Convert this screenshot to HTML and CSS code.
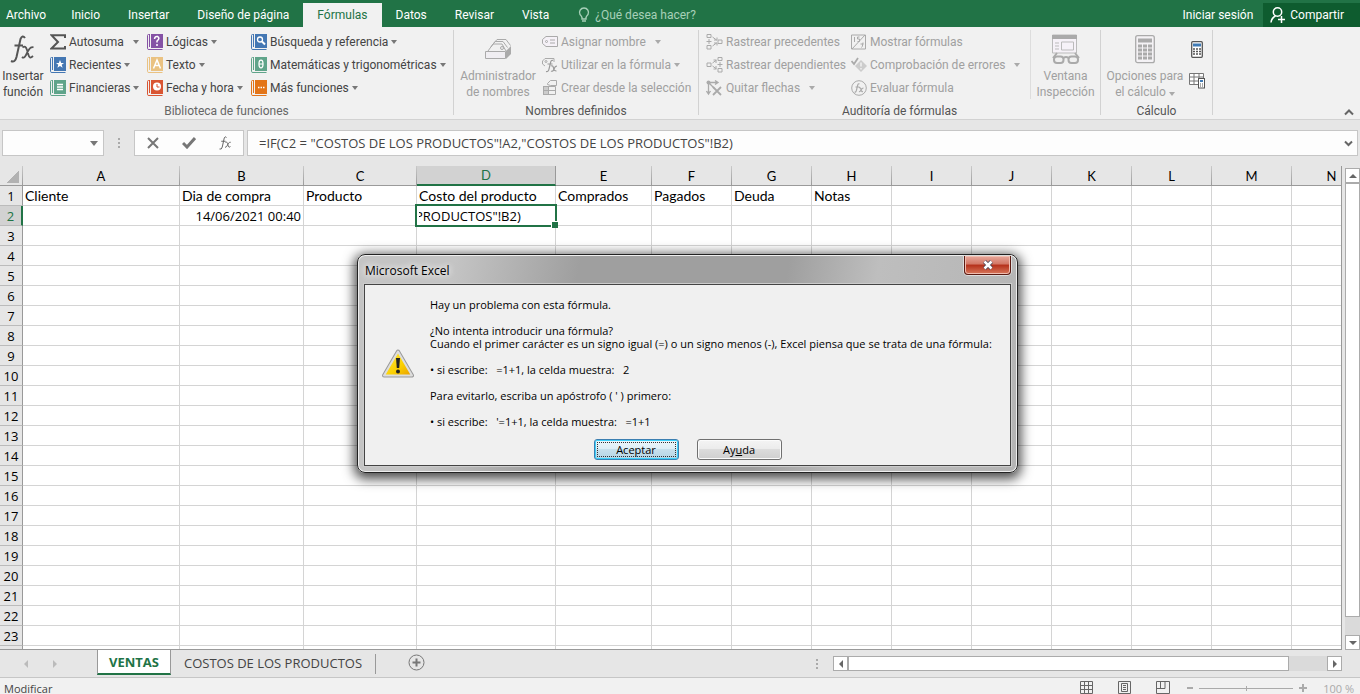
FILE: index.html
```html
<!DOCTYPE html>
<html lang="es">
<head>
<meta charset="utf-8">
<title>Microsoft Excel</title>
<link rel="stylesheet" href="styles.css">
</head>
<body>
<svg class="defs" aria-hidden="true">
  <symbol id="book" viewBox="0 0 16 16"><path d="M2.500 .5H1.500Q.5.5 .5 1.500V14.500Q.5 15.500 2 15.500H15.500" fill="none" stroke="currentColor"/><path d="M2 0h1v13H2z" fill="currentColor"/><path d="M4 0h12v14H4z" fill="currentColor"/></symbol>
  <symbol id="fx" viewBox="0 0 26 28"><path d="M15 3Q12.500-.5 10.500 4L6.500 22Q5 28 1 26M4.500 10.500H13" fill="none" stroke="currentColor" stroke-width="2"/><path d="M12.500 12.500Q15.500 10 17 15L18.500 20Q19.500 24.500 23 21M23.500 12.500Q21 11 18 16L16 20Q14 24 12 22" fill="none" stroke="currentColor" stroke-width="1.800"/></symbol>
</svg>

<header class="tabs">
  <nav class="tab-list">
    <button class="tab tab-file">Archivo</button>
    <button class="tab">Inicio</button>
    <button class="tab">Insertar</button>
    <button class="tab">Diseño de página</button>
    <button class="tab tab-active">Fórmulas</button>
    <button class="tab">Datos</button>
    <button class="tab">Revisar</button>
    <button class="tab">Vista</button>
  </nav>
  <button class="tell-me"><svg width="12" height="16" viewBox="0 0 12 16"><path d="M4 10.500Q3.500 9 2 7.500A4.500 4.500 0 1 1 10 7.500Q8.500 9 8 10.500V12H4zM4 14h4" fill="none" stroke="currentColor" stroke-width="1.400"/></svg><span>¿Qué desea hacer?</span></button>
  <button class="sign-in">Iniciar sesión</button>
  <button class="share"><svg width="16" height="16" viewBox="0 0 16 16"><circle cx="7.500" cy="5" r="4.200" fill="none" stroke="#fff" stroke-width="1.500"/><path d="M1 15.500Q1.500 11 5.500 9M8 12.500h7M11.500 9v7" fill="none" stroke="#fff" stroke-width="1.500"/></svg><span>Compartir</span></button>
</header>

<section class="ribbon">
  <div class="group group-library">
    <div class="group-body">
      <button class="big insert-fn"><svg class="big-icon" width="26" height="30"><use href="#fx"/></svg><span>Insertar<br>función</span></button>
      <div class="cmds">
        <button class="cmd cmd-sum"><svg width="16" height="16" viewBox="0 0 16 16"><path d="M15 4V1.200H1.500L8 8 1.500 14.500H15V12" fill="none" stroke="#555" stroke-width="2"/></svg><span>Autosuma</span><i class="caret"></i></button>
        <button class="cmd blue"><svg width="16" height="16"><use href="#book"/><path d="M10 3l1.200 3H14l-2.300 1.800.9 3L10 9l-2.600 1.800.9-3L6 6h2.800z" fill="#fff"/></svg><span>Recientes</span><i class="caret"></i></button>
        <button class="cmd teal"><svg width="16" height="16"><use href="#book"/><path d="M7 4.500h6M7 7h6M7 9.500h6" stroke="#fff" stroke-width="1.500"/></svg><span>Financieras</span><i class="caret"></i></button>
      </div>
      <div class="cmds">
        <button class="cmd purple"><svg width="16" height="16"><use href="#book"/><path d="M7.500 5Q8 2 10.500 2.500 13.500 4 10 7V8.500M10 10v2" fill="none" stroke="#fff" stroke-width="1.500"/></svg><span>Lógicas</span><i class="caret"></i></button>
        <button class="cmd sand"><svg width="16" height="16"><use href="#book"/><path d="M6.500 11.500L10 3l3.500 8.500M8 8.500h4" fill="none" stroke="#fff" stroke-width="1.500"/></svg><span>Texto</span><i class="caret"></i></button>
        <button class="cmd red"><svg width="16" height="16"><use href="#book"/><circle cx="10" cy="6.500" r="4" fill="#fff"/><path d="M10 4v3h2.500" fill="none" stroke="#d95532"/></svg><span>Fecha y hora</span><i class="caret"></i></button>
      </div>
      <div class="cmds">
        <button class="cmd blue"><svg width="16" height="16"><use href="#book"/><circle cx="9" cy="5.500" r="2.500" fill="none" stroke="#fff" stroke-width="1.300"/><path d="M11 7.500l3 3" stroke="#fff" stroke-width="2"/></svg><span>Búsqueda y referencia</span><i class="caret"></i></button>
        <button class="cmd teal"><svg width="16" height="16"><use href="#book"/><ellipse cx="10" cy="7" rx="2" ry="3.800" fill="none" stroke="#fff" stroke-width="1.300"/><path d="M8 7h4" stroke="#fff"/></svg><span>Matemáticas y trigonométricas</span><i class="caret"></i></button>
        <button class="cmd orange"><svg width="16" height="16"><use href="#book"/><path d="M7 7.500h1.500M9.500 7.500H11M12 7.500h1.500" stroke="#fff" stroke-width="1.500"/></svg><span>Más funciones</span><i class="caret"></i></button>
      </div>
    </div>
    <div class="group-label muted">Biblioteca de funciones</div>
  </div>

  <div class="group group-names">
    <div class="group-body off">
      <button class="big name-mgr"><svg class="big-icon" width="28" height="30" viewBox="0 0 28 30"><g transform="translate(0 2)"><path d="M1.500 15.500h20v7h-20z" fill="#f0eef2" stroke="#aaa"/><path d="M22 15l5-5v8l-5 5z" fill="#aaa"/><path d="M4 15l5-7h9l4 7M7 11l4-5.500h8l4.500 6M10 7l3-3.500h9l4.500 6" fill="none" stroke="#aaa"/><circle cx="18" cy="12" r="1.500" fill="none" stroke="#aaa"/></g></svg><span>Administrador<br>de nombres</span></button>
      <div class="cmds">
        <button class="cmd"><svg width="16" height="16" viewBox="0 0 16 16"><path d="M4 2.500h11.500v10H4L.5 9.500v-4z" fill="#f5f1f7" stroke="#aaa"/><circle cx="4.500" cy="7.500" r="1" fill="none" stroke="#aaa"/><path d="M8 6h5M8 9h5" stroke="#aaa"/></svg><span>Asignar nombre</span><i class="caret caret-far"></i></button>
        <button class="cmd"><svg width="16" height="16" viewBox="0 0 16 16"><path d="M3 9L.5 7V4L3 1.500h9V5" fill="none" stroke="#aaa"/><circle cx="4" cy="4.500" r="1" fill="none" stroke="#aaa"/><path d="M11 3.500Q9 2.500 8.500 6L7 12Q6.500 15 4 14.500M5.500 7h5M9 9q2-1 2.500 2t3 3M15 9q-2 0-3 3t-3 2" fill="none" stroke="#999" stroke-width="1.200"/></svg><span>Utilizar en la fórmula</span><i class="caret"></i></button>
        <button class="cmd"><svg width="16" height="16" viewBox="0 0 16 16"><path d="M1 7h5v8H1z" fill="#ccc"/><path d="M1 6.500h12.500v8H1M1.500 6.500v8M6.500 6.500v8M1 10.500h12" fill="none" stroke="#aaa"/><path d="M5.500 4.500v-1l3-3h6v5h-6z" fill="#f1f1f1" stroke="#aaa"/></svg><span>Crear desde la selección</span></button>
      </div>
    </div>
    <div class="group-label">Nombres definidos</div>
  </div>

  <div class="group group-audit">
    <div class="group-body off">
      <div class="cmds">
        <button class="cmd"><svg width="17" height="16" viewBox="0 0 17 16" fill="none" stroke="#aaa"><path d="M1 .5h4v3H1zM1 11.500h4v3.500H1zM12 6h4v3.500h-4zM3 5v5M.5 7.500h5M6.500 3l4 3M6.500 12l4-3M8 6h3V3.500M8 9h3v2.500"/></svg><span>Rastrear precedentes</span></button>
        <button class="cmd"><svg width="17" height="16" viewBox="0 0 17 16" fill="none" stroke="#aaa"><path d="M12 .5h4v3h-4zM12 11.500h4v3.500h-4zM1 6h4v3.500H1zM14 5v5M11.500 7.500h5M6.500 6l4-3M6.500 9l4 3M7.500 3H10v3M7.500 12H10V9"/></svg><span>Rastrear dependientes</span></button>
        <button class="cmd"><svg width="17" height="16" viewBox="0 0 17 16" fill="none" stroke="#aaa"><path d="M2.500 2v12M.5 11l2 3 2-3M2 2.500h10M9 .5l3 2-3 2M3 3l5 5" stroke-width="1.300"/><path d="M7 7l8 8M15 7l-8 8" stroke-width="1.800"/><circle cx="2.500" cy="2.500" r="2" fill="#aaa" stroke="none"/></svg><span>Quitar flechas</span><i class="caret caret-far"></i></button>
      </div>
      <div class="cmds">
        <button class="cmd"><svg width="16" height="16" viewBox="0 0 16 16" fill="none" stroke="#aaa"><path d="M.5 15V1h14v14zM1 15L14 1"/><path d="M3.500 3v5M8.500 3H6.500v2h2v2.500h-2M10.500 13.500q1 0 1.500-5M9.500 10h3"/></svg><span>Mostrar fórmulas</span></button>
        <button class="cmd"><svg width="16" height="16" viewBox="0 0 16 16"><path d="M10 3l6 6-6 6-6-6z" fill="#ccc"/><path d="M10 5.500v4M10 11v1.500" stroke="#f0f0f0" stroke-width="1.500"/><path d="M.5 4l2.500 3 4-6" fill="none" stroke="#aaa" stroke-width="1.800"/></svg><span>Comprobación de errores</span><i class="caret caret-far"></i></button>
        <button class="cmd"><svg width="16" height="16" viewBox="0 0 16 16" fill="none" stroke="#aaa"><circle cx="8" cy="8" r="7.300"/><path d="M8.500 4Q7 3 6.500 6L5.500 10Q5 12.500 3.500 12M4.500 7h4M8 8q1.500-1 2 1.500t2 2M12.500 8q-1.500 0-2.500 2t-2 1.500" stroke-width="1.200"/></svg><span>Evaluar fórmula</span></button>
      </div>
      <button class="big watch"><svg class="big-icon" width="30" height="30" viewBox="0 0 30 30"><path d="M1.500 1h24v18h-24z" fill="#f6f2f8" stroke="#bbb"/><path d="M1 1h25v4H1z" fill="#aaa"/><path d="M4 9h4M4 12h4M4 15h4M10.500 8h12v8h-12z" fill="none" stroke="#bbb"/><path d="M1 20h28v10H1z" fill="#f0f0f0"/><path d="M2 24l4-5M28 24l-4-5M12.500 24q2.500-2 5 0" fill="none" stroke="#aaa" stroke-width="2"/><rect x="3" y="22.500" width="9.500" height="6.500" rx="3" fill="none" stroke="#aaa" stroke-width="2"/><rect x="17.500" y="22.500" width="9.500" height="6.500" rx="3" fill="none" stroke="#aaa" stroke-width="2"/></svg><span>Ventana<br>Inspección</span></button>
    </div>
    <div class="group-label">Auditoría de fórmulas</div>
  </div>

  <div class="group group-calc">
    <div class="group-body">
      <button class="big calc-opt off"><svg class="big-icon" width="20" height="30" viewBox="0 0 20 30"><rect x=".7" y="1.700" width="18.600" height="27" rx="2" fill="#f4f2f5" stroke="#aaa" stroke-width="1.300"/><path d="M3 4.500h14v4H3z" fill="#aaa"/><path d="M3 12h14M3 16h14M3 20h14M3 24h14" stroke="#aaa" stroke-width="3" stroke-dasharray="4 1"/></svg><span>Opciones para<br>el cálculo <i class="caret"></i></span></button>
      <div class="calc-now">
        <button class="icon-btn" aria-label="Calcular ahora"><svg width="16" height="17" viewBox="0 0 16 17"><rect x="2.700" y=".7" width="10.600" height="15.600" rx="1" fill="#fff" stroke="#555" stroke-width="1.300"/><path d="M4 2.500h8v3H4z" fill="#3f7ab5"/><path d="M4 8h8M4 10.500h8M4 13h8" stroke="#555" stroke-width="1.500" stroke-dasharray="2 1"/></svg></button>
        <button class="icon-btn" aria-label="Calcular hoja"><svg width="16" height="17" viewBox="0 0 16 17"><path d="M.5 1.500h14v11H.5zM.5 5h14M.5 9h14M5 1v12M10 1v12" fill="#fff" stroke="#777"/><rect x="9.500" y="6.500" width="6" height="9.500" fill="#fff" stroke="#555"/><path d="M11 8h3v2h-3z" fill="#3f7ab5"/><path d="M11 12h3M11 14h3" stroke="#555" stroke-dasharray="1 1"/></svg></button>
      </div>
    </div>
    <div class="group-label">Cálculo</div>
  </div>
  <button class="collapse" aria-label="Contraer la cinta"><svg width="10" height="7" viewBox="0 0 10 7"><path d="M1 5.500l4-4 4 4" fill="none" stroke="#666" stroke-width="2"/></svg></button>
</section>

<section class="formula-bar">
  <div class="name-box"><input aria-label="Cuadro de nombres"><i class="caret"></i></div>
  <i class="dots"></i>
  <div class="edit-btns">
    <button aria-label="Cancelar"><svg width="12" height="12" viewBox="0 0 12 12"><path d="M1 1l10 10M11 1L1 11" stroke="#777" stroke-width="2"/></svg></button>
    <button aria-label="Introducir"><svg width="14" height="12" viewBox="0 0 14 12"><path d="M1 6l4 4 8-9" fill="none" stroke="#777" stroke-width="3"/></svg></button>
    <button class="fx-small" aria-label="Insertar función"><svg width="13" height="14"><use href="#fx"/></svg></button>
  </div>
  <div class="formula">
    <input aria-label="Barra de fórmulas" value="=IF(C2 = &quot;COSTOS DE LOS PRODUCTOS&quot;!A2,&quot;COSTOS DE LOS PRODUCTOS&quot;!B2)">
    <svg width="9" height="7" viewBox="0 0 9 7"><path d="M1 1.500l3.500 3.500L8 1.500" fill="none" stroke="#666" stroke-width="2"/></svg>
  </div>
</section>

<main class="sheet">
  <div class="grid-wrap">
    <table class="grid" id="grid"></table>
  </div>
  <div class="vscroll">
    <button class="sb-btn" aria-label="Subir"><i class="tri up"></i></button>
    <div class="vtrack"><div class="vthumb"></div></div>
    <button class="sb-btn" aria-label="Bajar"><i class="tri down"></i></button>
  </div>
</main>

<section class="sheet-tabs">
  <div class="sheet-nav"><i class="tri left"></i><i class="tri right"></i></div>
  <button class="sheet-tab sheet-active">VENTAS</button>
  <button class="sheet-tab">COSTOS DE LOS PRODUCTOS</button>
  <i class="tab-sep"></i>
  <button class="add-sheet" aria-label="Hoja nueva"><svg width="17" height="17" viewBox="0 0 17 17"><circle cx="8.500" cy="8.500" r="7.500" fill="none" stroke="#777"/><path d="M4.500 8.500h8M8.500 4.500v8" stroke="#777" stroke-width="2"/></svg></button>
  <div class="hscroll">
    <i class="dots"></i>
    <button class="sb-btn" aria-label="Izquierda"><i class="tri left"></i></button>
    <div class="htrack"><div class="hthumb"></div></div>
    <button class="sb-btn" aria-label="Derecha"><i class="tri right"></i></button>
  </div>
</section>

<footer class="status">
  <span>Modificar</span>
  <div class="views">
    <svg width="14" height="14" viewBox="0 0 14 14"><path d="M.5.5h12v12H.5zM.5 4.500h12M.5 8.500h12M4.500.5v12M8.500.5v12" fill="none" stroke="#666"/></svg>
    <svg width="14" height="14" viewBox="0 0 14 14"><path d="M.5.5h12v12H.5z" fill="none" stroke="#666"/><path d="M3.500 2.500h6v8h-6zM5 4.500h3M5 6.500h3M5 8.500h3" fill="none" stroke="#666"/></svg>
    <svg width="14" height="14" viewBox="0 0 14 14"><path d="M.5.5h13v12H.5zM.5 7.500h8.500V.5M4.500.5v7" fill="none" stroke="#666"/></svg>
  </div>
  <div class="zoom">
    <svg width="6" height="8" viewBox="0 0 6 8"><path d="M0 4h6" stroke="#aaa" stroke-width="2"/></svg>
    <svg width="94" height="8" viewBox="0 0 94 8"><path d="M0 4.500h94M47.500 2v5" stroke="#aaa"/></svg>
    <svg width="8" height="8" viewBox="0 0 8 8"><path d="M0 4h8M4 0v8" stroke="#aaa" stroke-width="2"/></svg>
    <span>100 %</span>
  </div>
</footer>

<div class="dialog" role="alertdialog" aria-labelledby="dlg-title">
  <div class="dlg-head">
    <span id="dlg-title">Microsoft Excel</span>
    <button class="dlg-close" aria-label="Cerrar"><svg width="12" height="10" viewBox="0 0 12 10"><path d="M2.500 1.500l7 7M9.500 1.500l-7 7" stroke="#445" stroke-width="4"/><path d="M2.500 1.500l7 7M9.500 1.500l-7 7" stroke="#fff" stroke-width="2.500"/></svg></button>
  </div>
  <div class="dlg-body">
    <div class="dlg-main">
      <svg width="32" height="30" viewBox="0 0 32 30"><defs><linearGradient id="warn" x2="1" y2="1"><stop offset="0" stop-color="#ffe94a"/><stop offset=".6" stop-color="#fbd000"/><stop offset="1" stop-color="#e89c00"/></linearGradient></defs><path d="M16 2.500L30 26.500H2z" fill="url(#warn)" stroke="#999" stroke-width="4" stroke-linejoin="round"/><path d="M16 2.500L30 26.500H2z" fill="url(#warn)" stroke="#ddd" stroke-width="2" stroke-linejoin="round"/><path d="M14 9h4l-.8 10h-2.400z" fill="#222"/><circle cx="16" cy="22.500" r="2" fill="#222"/></svg>
      <div class="dlg-text">
        <p>Hay un problema con esta fórmula.</p>
        <p>¿No intenta introducir una fórmula?<br>Cuando el primer carácter es un signo igual (=) o un signo menos (-), Excel piensa que se trata de una fórmula:</p>
        <p>• si escribe: &nbsp; =1+1, la celda muestra: &nbsp; 2</p>
        <p>Para evitarlo, escriba un apóstrofo ( ' ) primero:</p>
        <p>• si escribe: &nbsp; '=1+1, la celda muestra: &nbsp; =1+1</p>
      </div>
    </div>
    <div class="dlg-btns">
      <button class="dlg-btn dlg-ok">Aceptar</button>
      <button class="dlg-btn">Ay<u>u</u>da</button>
    </div>
  </div>
</div>
<script src="grid.js"></script>
</body>
</html>
```
FILE: grid.js
```js
const columns = [["A", 157], ["B", 124], ["C", 113], ["D", 139], ["E", 96], ["F", 80], ["G", 80], ["H", 80], ["I", 80], ["J", 80], ["K", 80], ["L", 80], ["M", 80], ["N", 80]];
const cells = {
  A1: "Cliente", B1: "Dia de compra", C1: "Producto", D1: "Costo del producto",
  E1: "Comprados", F1: "Pagados", G1: "Deuda", H1: "Notas", B2: "14/06/2021 00:40"
};
const labelledRows = 23;

let html = '<colgroup><col class="col-head">' + columns.map(c => `<col style="width:${c[1]}px">`).join("") + "</colgroup>";
html += '<thead><tr><th class="corner"></th>' + columns.map(c => `<th scope="col"${c[0] === "D" ? ' class="picked"' : ""}>${c[0]}</th>`).join("") + "</tr></thead><tbody>";
for (let r = 1; r <= labelledRows + 1; r++) {
  html += `<tr><th scope="row"${r === 2 ? ' class="picked"' : ""}>${r <= labelledRows ? r : ""}</th>`;
  for (const [name] of columns) {
    const id = name + r;
    if (id === "D2") html += '<td class="editing"><div class="editor"><span>PRODUCTOS"!B2)</span></div></td>';
    else html += `<td${id === "B2" ? ' class="num"' : ""}>${cells[id] || ""}</td>`;
  }
  html += "</tr>";
}
document.getElementById("grid").innerHTML = html + "</tbody>";
```
FILE: styles.css
```css
* { box-sizing: border-box; }
body {
  margin: 0; height: 100vh; display: flex; flex-direction: column; overflow: hidden;
  background: #e6e6e6; color: #444; position: relative;
  font: 12px/16px Roboto, "Open Sans", sans-serif;
}
button { border: 0; padding: 0; margin: 0; background: none; color: inherit; font: inherit; white-space: nowrap; }
input { font: inherit; color: inherit; border: 0; padding: 0; background: none; outline: 0; min-width: 0; }
svg { flex: none; display: block; }
.defs { position: absolute; width: 0; height: 0; }

.caret { display: inline-block; flex: none; border: 3px solid transparent; border-top: 4px solid #777; border-bottom: 0; }
.tri { width: 0; height: 0; border: 4px solid transparent; }
.tri.up { border-top: 0; border-bottom-color: #666; }
.tri.down { border-bottom: 0; border-top-color: #666; }
.tri.left { border-left: 0; border-right-color: #666; }
.tri.right { border-right: 0; border-left-color: #666; }
.dots { width: 2px; height: 10px; background: repeating-linear-gradient(#aaa 0 2px, transparent 2px 4px); }

.tabs { flex: none; height: 27px; display: flex; align-items: stretch; background: #217346; color: #fff; padding-top: 3px; }
.tab-list { display: flex; }
.tab { padding: 0 14px; }
.tab-file { padding: 0 11px 0 6px; }
.tab-active { background: #f1f1f1; color: #217346; }
.tell-me { display: flex; align-items: center; gap: 5px; margin-left: 15px; color: #a7d0b8; }
.sign-in { margin-left: auto; padding: 0 10px; }
.share { display: flex; align-items: center; gap: 4px; padding: 0 16px 0 7px; background: #0e5c2f; }

.ribbon { flex: none; display: flex; background: #f1f1f1; border-bottom: 1px solid #d2d2d2; padding-top: 3px; height: 93px; position: relative; }
.group { position: relative; display: flex; flex-direction: column; border-right: 1px solid #d2d2d2; margin-bottom: 4px; }
.group-body { display: flex; height: 69px; }
.group-label { text-align: center; margin-top: 4px; color: #555; }
.muted { color: #666; }
.off { color: #a0a0a0; }
.off .caret { border-top-color: #aaa; }
.group-library { width: 454px; }
.group-names { width: 245px; }
.group-audit { width: 402px; }
.group-calc { width: 112px; }
.big { display: flex; flex-direction: column; align-items: center; padding-top: 4px; }
.big-icon { margin-bottom: 4px; }
.insert-fn { width: 46px; margin-right: 4px; color: #555; }
.insert-fn span { color: #444; }
.name-mgr { width: 88px; }
.watch { width: 70px; margin-left: auto; border-left: 1px solid #ddd; }
.calc-opt { width: 88px; }
.cmds { display: flex; flex-direction: column; }
.cmd { height: 23px; display: flex; align-items: center; gap: 3px; }
.group-library .cmds { width: 97px; }
.group-library .cmds:nth-child(3) { width: 104px; }
.group-library .cmds:nth-child(4) { width: auto; }
.cmd-sum .caret { margin-left: 6px; }
.caret-far { margin-left: 6px; }
.group-audit .cmds:first-child { width: 145px; margin-left: 7px; }
.blue svg { color: #4477b3; }
.teal svg { color: #5fa48a; }
.purple svg { color: #8552a5; }
.sand svg { color: #eac282; }
.red svg { color: #d95532; }
.orange svg { color: #e37519; }
.calc-now { display: flex; flex-direction: column; gap: 14px; padding-top: 11px; }
.collapse { margin: auto 6px 3px auto; }

.formula-bar { flex: none; height: 46px; display: flex; align-items: center; padding: 0 2px; }
.name-box, .edit-btns, .formula { display: flex; align-items: center; height: 26px; background: #fdfdfd; border: 1px solid #c6c6c6; }
.name-box { width: 102px; padding-right: 5px; }
.name-box input { flex: 1; }
.name-box .caret { border-width: 5px 4px 0; }
.formula-bar > .dots { margin: 0 14px; }
.edit-btns { width: 110px; margin-right: 3px; color: #666; justify-content: space-around; }
.formula { flex: 1; padding: 0 4px 0 11px; font: 13px/16px "Open Sans", sans-serif; }
.formula input { flex: 1; }

.sheet { flex: 1; min-height: 0; display: flex; }
.grid-wrap { flex: 1; min-width: 0; overflow: hidden; background: #fff; border-right: 1px solid #999; border-bottom: 1px solid #999; }
.grid { table-layout: fixed; border-collapse: separate; border-spacing: 0; width: 1372px; color: #000; font: 14px/18px Lato, "Open Sans", sans-serif; }
.col-head { width: 23px; }
.grid th { font: 13px/18px "Open Sans", sans-serif; padding: 0; height: 20px; background: #e6e6e6; border-right: 1px solid #999; text-align: center; }
.grid thead th { font-family: Lato, sans-serif; border-bottom: 1px solid #999; border-image: linear-gradient(#ccc, #999) 1; }
.grid tbody th { border-bottom: 1px solid #bbb; }
.grid .corner { background: linear-gradient(135deg, #e6e6e6 50%, #b2b2b2 50%) 7px 5px / 12px 12px no-repeat #e6e6e6; }
.grid thead .picked { background: #d2d2d2; color: #217346; border-image: none; border-bottom: 2px solid #217346; }
.grid tbody .picked { background: #d2d2d2; color: #217346; border-right: 2px solid #217346; }
.grid td { padding: 1px 2px 0; height: 20px; border-right: 1px solid #d4d4d4; border-bottom: 1px solid #d4d4d4; white-space: nowrap; overflow: hidden; }
.grid .num { text-align: right; font: 13px/18px "Open Sans", sans-serif; }
.grid .editing { position: relative; overflow: visible; }
.editor { position: absolute; inset: -2px; border: 2px solid #217346; background: #fff; padding-left: 2px; font: 13px/20px "Open Sans", sans-serif; }
.editor span { display: block; overflow: hidden; text-indent: -4px; }
.editor::after { content: ""; position: absolute; right: -3px; bottom: -3px; width: 6px; height: 6px; background: #217346; border: solid #fff; border-width: 1px 0 0 1px; }
.vscroll { width: 18px; padding: 2px 0 0 3px; display: flex; flex-direction: column; }
.sb-btn { flex: none; width: 15px; height: 15px; background: #fff; border: 1px solid #ababab; display: flex; align-items: center; justify-content: center; }
.vtrack { flex: 1; background: #dadada; }
.vthumb { height: 96%; background: #fff; border: 1px solid #ababab; }

.sheet-tabs { flex: none; height: 28px; display: flex; align-items: flex-start; border-bottom: 1px solid #c6c6c6; font-family: "Open Sans", sans-serif; }
.sheet-nav { width: 97px; height: 27px; display: flex; align-items: center; gap: 25px; padding-left: 24px; }
.sheet-nav .left { border-right-color: #bbb; }
.sheet-nav .right { border-left-color: #bbb; }
.sheet-tab { height: 26px; padding: 0 13px; font-size: 13px; }
.sheet-active { height: 25px; padding: 0 11px; background: #fff; color: #217346; font-weight: 700; border: solid #999; border-width: 0 1px; border-bottom: 2px solid #217346; }
.tab-sep { width: 1px; height: 20px; margin-top: 4px; background: #999; }
.add-sheet { margin: 4px 0 0 32px; }
.hscroll { width: 544px; height: 27px; margin-left: auto; padding-right: 18px; display: flex; align-items: center; }
.hscroll .dots { margin-right: 15px; }
.htrack { flex: 1; height: 15px; background: #dadada; }
.hthumb { width: 92%; height: 15px; background: #fff; border: 1px solid #ababab; }

.status { flex: none; height: 16px; background: #f1f1f1; display: flex; padding: 3px 6px 0 4px; font: 11px/15px "Open Sans", sans-serif; }
.views { display: flex; gap: 24px; margin-left: auto; }
.zoom { display: flex; align-items: flex-start; gap: 6px; margin-left: 17px; color: #aaa; }
.zoom svg { margin-top: 3px; }
.zoom span { margin-left: 10px; }

.dialog {
  position: absolute; left: 357px; top: 254px; width: 661px; padding: 1px 6px 6px;
  border: 1px solid #222; border-radius: 8px; color: #000; font: 11px/13px "Open Sans", "Noto Sans", sans-serif;
  background: linear-gradient(100deg, #c4c4c4 0, #c4c4c4 14%, #9f9f9f 32%, #9f9f9f 62%, #bebebe 75%, #b4b4b4 100%);
  box-shadow: inset 0 0 0 1px #eee, 0 3px 12px 3px rgba(0, 0, 0, .7);
}
.dlg-head { display: flex; height: 28px; align-items: center; padding-left: 1px; font-size: 12px; }
.dlg-head span { text-shadow: 0 0 6px #fff, 0 0 10px #fff; }
.dlg-close { width: 47px; height: 19px; margin-left: auto; align-self: flex-start; display: flex; align-items: center; justify-content: center; border: 1px solid #5b1a12; border-top: 0; border-radius: 0 0 4px 4px; background: linear-gradient(#e8a79b, #d27664 45%, #b5301a 50%, #d8785c); box-shadow: inset 0 0 0 1px #f0bdb0, 0 0 0 1px #ddd; }
.dlg-body { background: #f0f0f0; border: 1px solid #444; box-shadow: 0 0 0 1px #ccc; padding: 13px 17px 5px; }
.dlg-main { display: flex; align-items: center; gap: 16px; }
.dlg-main svg { margin-bottom: 10px; }
.dlg-text { white-space: nowrap; }
.dlg-text p { margin: 0 0 13px; }
.dlg-text p:last-child { margin-bottom: 11px; }
.dlg-btns { display: flex; justify-content: center; gap: 18px; }
.dlg-btn { width: 85px; height: 21px; border: 1px solid #707070; border-radius: 3px; background: linear-gradient(#f4f4f4, #ebebeb 50%, #dcdcdc 50%, #cfcfcf); box-shadow: inset 0 0 0 1px #fbfbfb; }
.dlg-ok { border-color: #3c7fb1; background: linear-gradient(#eef6fa, #ddeef6 50%, #c8e0ec 50%, #b5d5e6); box-shadow: inset 0 0 0 1px #3ed0fa; outline: 1px dotted #333; outline-offset: -4px; }
```
